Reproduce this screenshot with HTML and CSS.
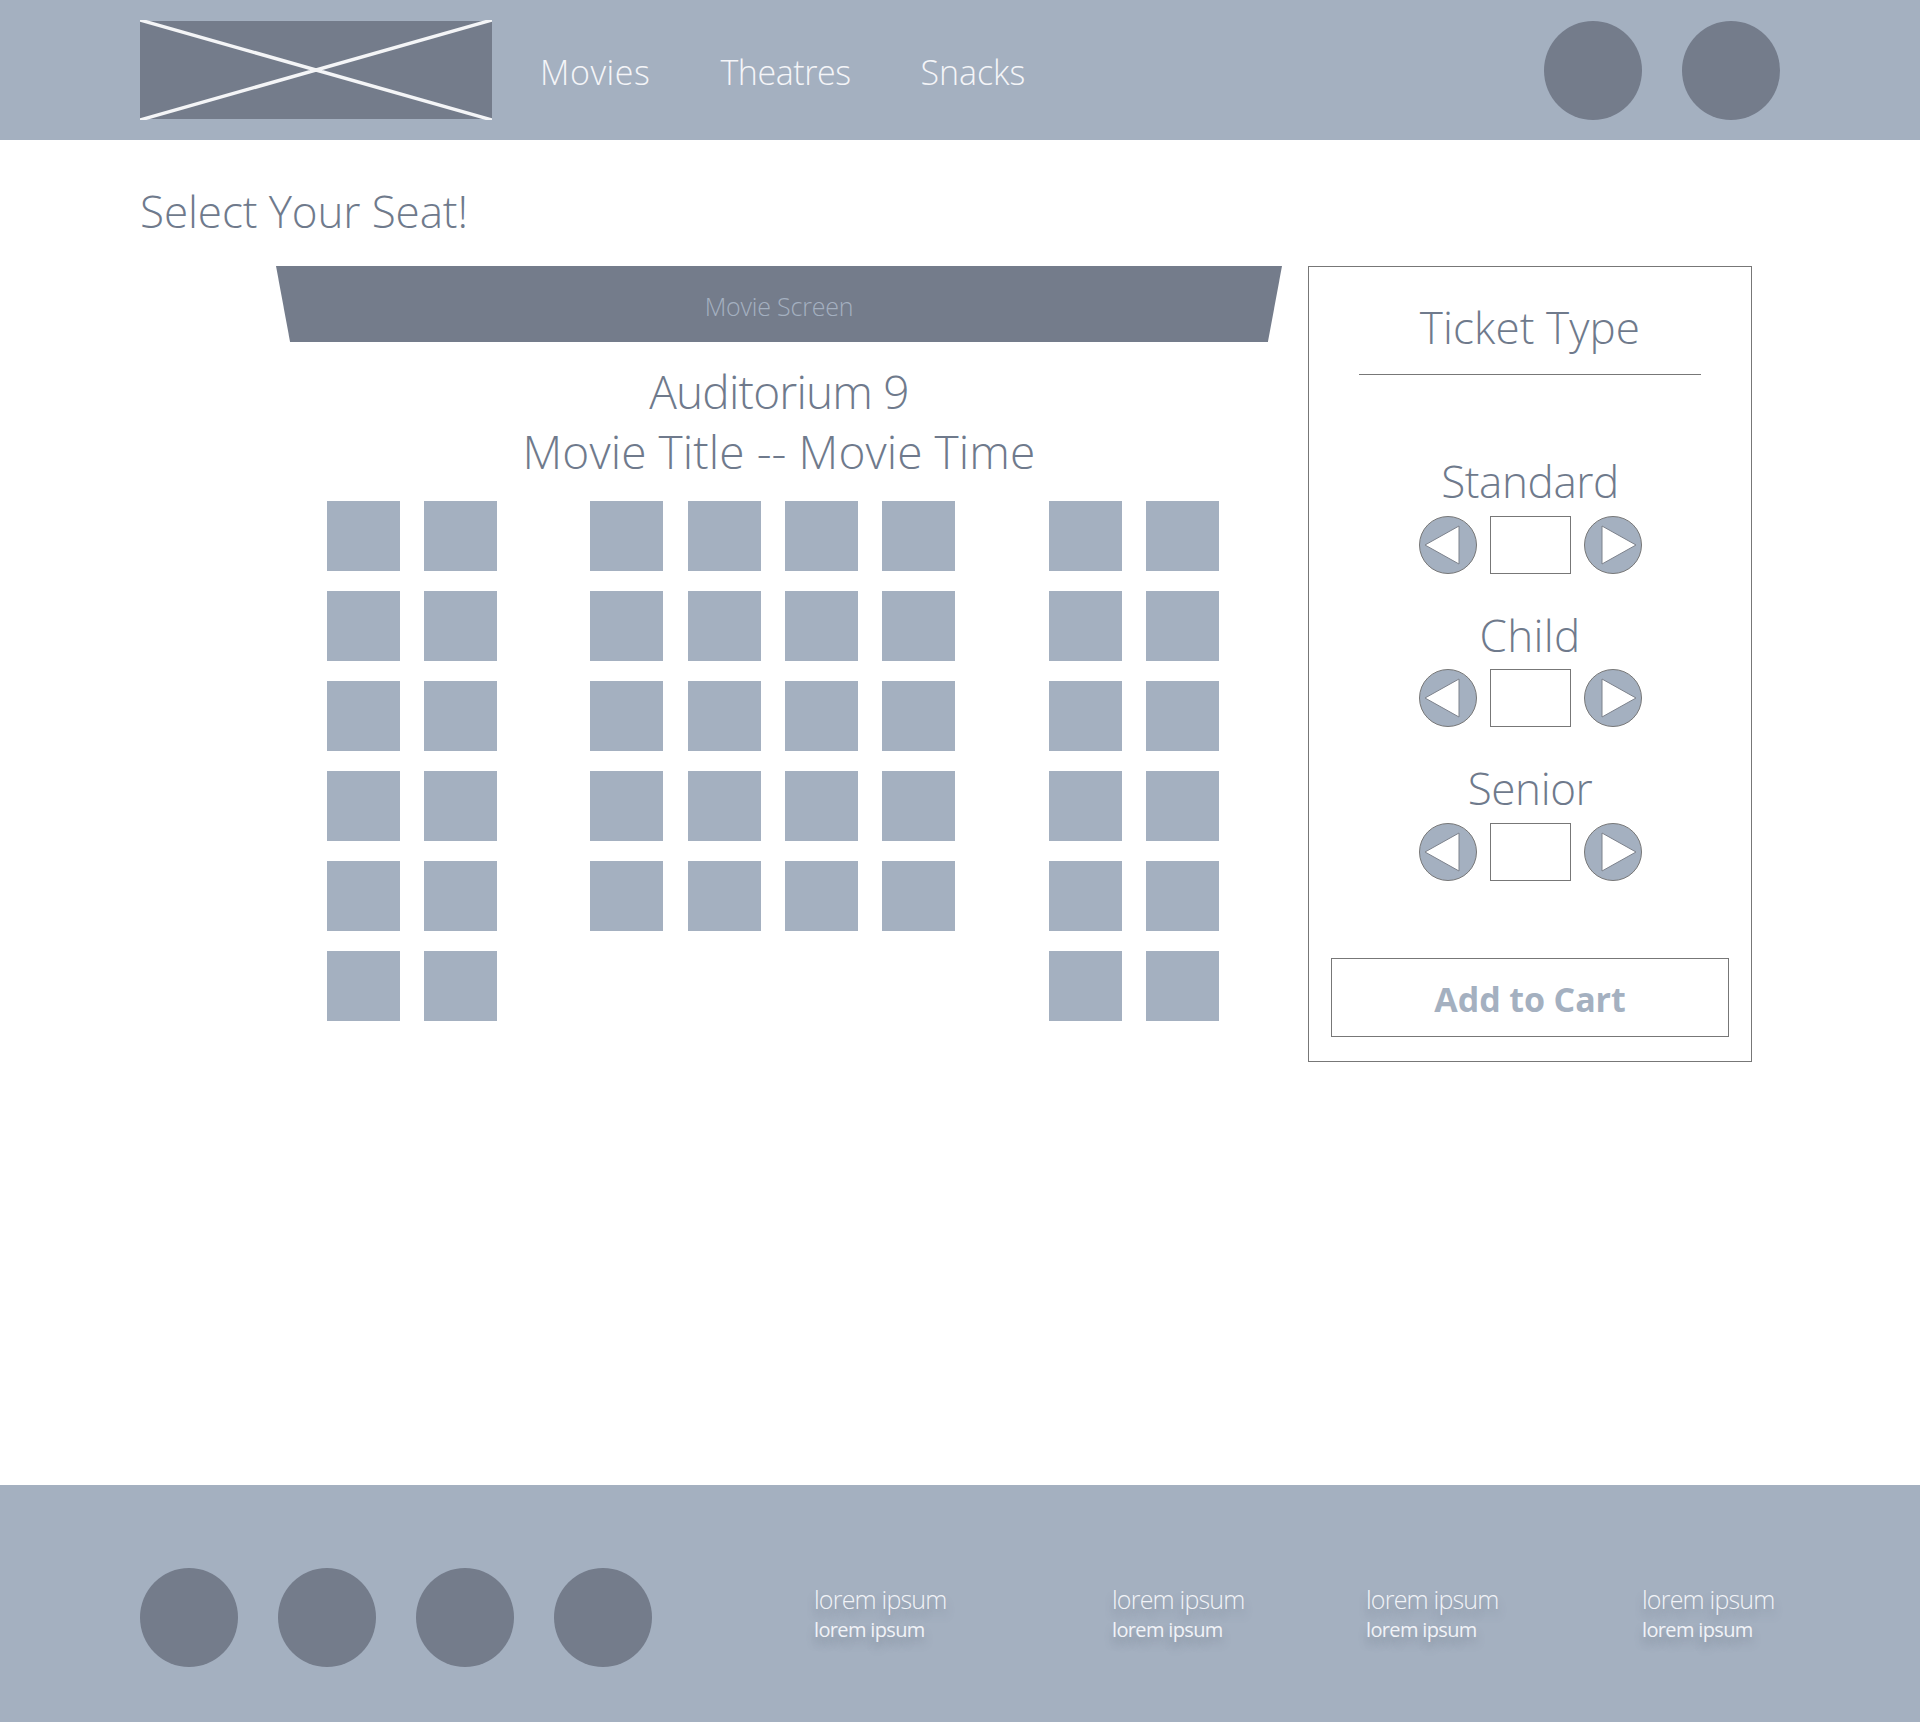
FILE: index.html
```html
<!DOCTYPE html>
<html lang="en">
<head>
<meta charset="utf-8">
<title>Select Your Seat</title>
<link rel="stylesheet" href="styles.css">
</head>
<body>
<header class="site-header">
  <svg class="logo" viewBox="0 0 352 100" preserveAspectRatio="none" aria-hidden="true">
    <rect x="0" y="1" width="352" height="98" fill="#747c8b"/>
    <path d="M0 0L352 100M352 0L0 100" stroke="#f4f5f7" stroke-width="3.4" fill="none"/>
  </svg>
  <nav class="nav">
    <a class="nav-link nav-movies">Movies</a>
    <a class="nav-link">Theatres</a>
    <a class="nav-link nav-snacks">Snacks</a>
  </nav>
  <div class="header-actions">
    <span class="circle"></span>
    <span class="circle"></span>
  </div>
</header>

<main class="main">
  <h1 class="page-title">Select Your Seat!</h1>
  <div class="columns">
    <section class="theatre">
      <div class="screen">Movie Screen</div>
      <h2 class="auditorium"><span class="aud-name">Auditorium 9</span><span class="aud-movie">Movie Title -- Movie Time</span></h2>
      <div class="seats">
        <div class="seat-group two">
          <i class="seat"></i><i class="seat"></i><i class="seat"></i><i class="seat"></i><i class="seat"></i><i class="seat"></i>
          <i class="seat"></i><i class="seat"></i><i class="seat"></i><i class="seat"></i><i class="seat"></i><i class="seat"></i>
        </div>
        <div class="seat-group four">
          <i class="seat"></i><i class="seat"></i><i class="seat"></i><i class="seat"></i>
          <i class="seat"></i><i class="seat"></i><i class="seat"></i><i class="seat"></i>
          <i class="seat"></i><i class="seat"></i><i class="seat"></i><i class="seat"></i>
          <i class="seat"></i><i class="seat"></i><i class="seat"></i><i class="seat"></i>
          <i class="seat"></i><i class="seat"></i><i class="seat"></i><i class="seat"></i>
        </div>
        <div class="seat-group two">
          <i class="seat"></i><i class="seat"></i><i class="seat"></i><i class="seat"></i><i class="seat"></i><i class="seat"></i>
          <i class="seat"></i><i class="seat"></i><i class="seat"></i><i class="seat"></i><i class="seat"></i><i class="seat"></i>
        </div>
      </div>
    </section>

    <aside class="panel">
      <h2 class="panel-title">Ticket Type</h2>
      <div class="ticket first">
        <div class="ticket-name">Standard</div>
        <div class="stepper">
          <svg class="arrow" viewBox="0 0 58 58" aria-hidden="true"><circle cx="29" cy="29" r="28.5"/><path class="tri" d="M6 29L40 10V48Z"/></svg>
          <span class="qty"></span>
          <svg class="arrow" viewBox="0 0 58 58" aria-hidden="true"><circle cx="29" cy="29" r="28.5"/><path class="tri" d="M52 29L18 10V48Z"/></svg>
        </div>
      </div>
      <div class="ticket">
        <div class="ticket-name ticket-child">Child</div>
        <div class="stepper">
          <svg class="arrow" viewBox="0 0 58 58" aria-hidden="true"><circle cx="29" cy="29" r="28.5"/><path class="tri" d="M6 29L40 10V48Z"/></svg>
          <span class="qty"></span>
          <svg class="arrow" viewBox="0 0 58 58" aria-hidden="true"><circle cx="29" cy="29" r="28.5"/><path class="tri" d="M52 29L18 10V48Z"/></svg>
        </div>
      </div>
      <div class="ticket">
        <div class="ticket-name">Senior</div>
        <div class="stepper">
          <svg class="arrow" viewBox="0 0 58 58" aria-hidden="true"><circle cx="29" cy="29" r="28.5"/><path class="tri" d="M6 29L40 10V48Z"/></svg>
          <span class="qty"></span>
          <svg class="arrow" viewBox="0 0 58 58" aria-hidden="true"><circle cx="29" cy="29" r="28.5"/><path class="tri" d="M52 29L18 10V48Z"/></svg>
        </div>
      </div>
      <div class="add-to-cart">Add to Cart</div>
    </aside>
  </div>
</main>

<footer class="site-footer">
  <div class="socials">
    <span class="circle"></span>
    <span class="circle"></span>
    <span class="circle"></span>
    <span class="circle"></span>
  </div>
  <div class="links">
    <div class="link-col col-a"><p class="big">lorem ipsum</p><p class="small">lorem ipsum</p></div>
    <div class="link-col col-b"><p class="big">lorem ipsum</p><p class="small">lorem ipsum</p></div>
    <div class="link-col col-c"><p class="big">lorem ipsum</p><p class="small">lorem ipsum</p></div>
    <div class="link-col col-d"><p class="big">lorem ipsum</p><p class="small">lorem ipsum</p></div>
  </div>
</footer>
</body>
</html>
```
FILE: styles.css
```css
* { box-sizing: border-box; }
html, body { margin: 0; padding: 0; }
body {
  width: 1920px;
  height: 1722px;
  background: #fff;
  font-family: "Open Sans", "Noto Sans", sans-serif;
  font-weight: 350;
  color: #6f7a8c;
  display: flex;
  flex-direction: column;
}
h1, h2, p { margin: 0; font-weight: 350; }

.site-header {
  height: 140px;
  background: #a4b0c0;
  padding: 20px 140px 20px 140px;
  display: flex;
  align-items: center;
  flex: none;
}
.logo { width: 352px; height: 100px; flex: none; display: block; }
.nav { display: flex; gap: 70px; margin-left: 48px; margin-top: 4px; }
.nav-link { color: #f4f5f8; font-size: 34px; line-height: 46px; letter-spacing: -.45px; }
.nav-movies { letter-spacing: .55px; }
.nav-snacks { letter-spacing: -.05px; }
.header-actions { margin-left: auto; display: flex; gap: 40px; }
.circle {
  display: block;
  width: 98px;
  height: 99px;
  border-radius: 50%;
  background: #747c8b;
  flex: none;
}

.main { flex: 1; padding: 0 140px; }
.page-title {
  font-size: 44px;
  line-height: 60px;
  letter-spacing: -.1px;
  padding-top: 41px;
  height: 126px;
}
.columns { display: flex; align-items: flex-start; }

.theatre { width: 1006px; margin-left: 136px; flex: none; }
.screen {
  height: 76px;
  background: #747c8b;
  clip-path: polygon(0 0, 100% 0, 98.6% 100%, 1.4% 100%);
  color: #a4b0c0;
  font-size: 25px;
  line-height: 80px;
  letter-spacing: -.2px;
  text-align: center;
}
.auditorium {
  font-size: 46px;
  line-height: 60px;
  text-align: center;
  margin-top: 19px;
}
.aud-name, .aud-movie { display: block; }
.aud-name { letter-spacing: -.8px; }
.aud-movie { letter-spacing: .1px; }
.seats { display: flex; gap: 93px; margin: 20px 0 0 51px; }
.seat-group { display: grid; row-gap: 20px; column-gap: 24.3px; align-content: start; }
.seat-group:last-child { margin-left: 1px; }
.seat-group.two { grid-template-columns: repeat(2, 73px); }
.seat-group.four { grid-template-columns: repeat(4, 73px); }
.seat { display: block; height: 70px; background: #a4b0c0; }

.panel {
  width: 444px;
  height: 796px;
  margin-left: 26px;
  border: 1px solid #777;
  padding: 0 22px;
  flex: none;
  display: flex;
  flex-direction: column;
  align-items: center;
}
.panel-title {
  width: 342px;
  height: 108px;
  border-bottom: 1px solid #777;
  font-size: 44px;
  line-height: 60px;
  letter-spacing: .1px;
  padding-top: 30px;
  text-align: center;
}
.ticket { height: 153.5px; display: flex; flex-direction: column; align-items: center; }
.ticket.first { margin-top: 76px; }
.ticket-name { font-size: 44px; line-height: 60px; letter-spacing: -.4px; height: 64.5px; }
.ticket-child { letter-spacing: .3px; }
.stepper { display: flex; align-items: center; gap: 13px; }
.arrow { width: 58px; height: 58px; display: block; flex: none; }
.arrow circle { fill: #a4b0c0; stroke: #777; stroke-width: 1; }
.arrow .tri { fill: #fff; stroke: #7d828c; stroke-width: 1; }
.qty { width: 81px; height: 58px; border: 1px solid #777; background: #fff; display: block; }
.add-to-cart {
  width: 398px;
  height: 79px;
  flex: none;
  margin-top: 46px;
  border: 1px solid #777;
  color: #a4b0c0;
  font-size: 34px;
  font-weight: 700;
  line-height: 80px;
  letter-spacing: -.1px;
  text-align: center;
}

.site-footer {
  height: 237px;
  background: #a4b0c0;
  flex: none;
  padding: 83px 0 0 140px;
  display: flex;
}
.socials { display: flex; gap: 40px; width: 674px; flex: none; }
.links { display: flex; }
.link-col { color: #f1f3f7; padding-top: 15px; text-shadow: 0 7px 8px rgba(90, 100, 115, .4); }
.col-a { width: 298px; }
.col-b { width: 254px; }
.col-c { width: 276px; }
.big { font-size: 25px; line-height: 32px; letter-spacing: -.8px; }
.small { font-size: 20px; line-height: 30px; letter-spacing: -.65px; font-weight: 400; }
```
